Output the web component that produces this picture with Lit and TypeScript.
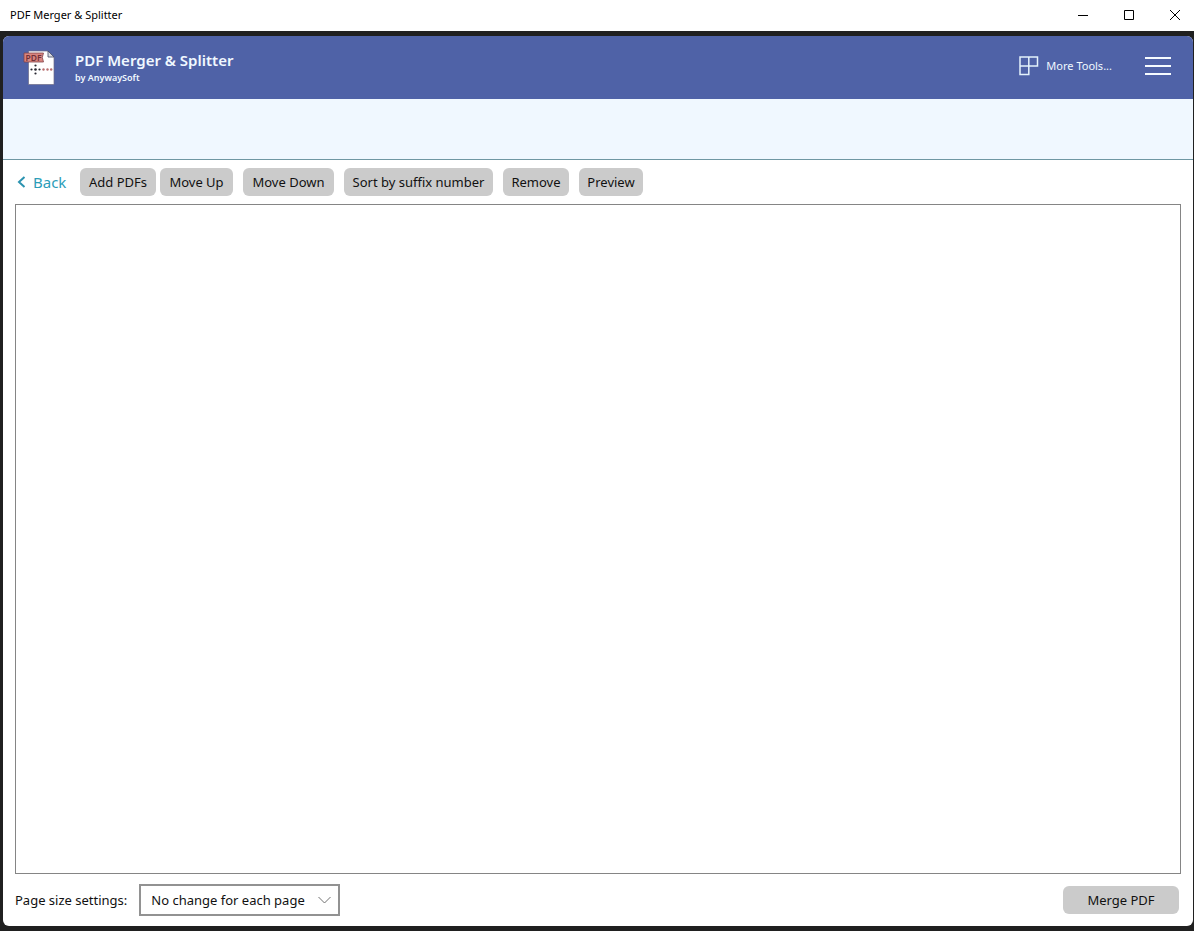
import { LitElement, html, css } from "lit";
import { customElement, state } from "lit/decorators.js";

@customElement("app-root")
export class AppRoot extends LitElement {
  @state() private pageSize = "No change for each page";

  static styles = css`
    :host {
      display: flex;
      flex-direction: column;
      height: 100vh;
      background: #202020;
      color: #111;
      font-family: "Noto Sans", "Open Sans", sans-serif;
      font-size: 13px;
      line-height: 20px;
    }
    * { box-sizing: border-box; }
    button, select { font: inherit; color: inherit; margin: 0; }
    button { border: 0; padding: 0; background: none; white-space: nowrap; }
    svg { display: block; }
    .titlebar {
      display: flex;
      justify-content: space-between;
      align-items: center;
      height: 31px;
      flex: none;
      padding: 0 0 2px 10px;
      background: #fff;
      color: #000;
      font-size: 11px;
    }
    .controls { display: flex; gap: 8px; }
    .controls button { display: grid; place-items: center; width: 38px; height: 28px; }
    .window {
      flex: 1;
      min-height: 0;
      display: flex;
      flex-direction: column;
      margin: 5px 1px 5px 3px;
      border-radius: 6px;
      overflow: hidden;
      background: #fff;
    }
    header {
      display: flex;
      align-items: center;
      height: 63px;
      flex: none;
      padding: 0 22px 0 20px;
      background: #4f62a7;
      color: #f0f8ff;
    }
    .brand { flex: 1; padding: 0 0 1px 19px; }
    h1 { margin: 0 0 1px; font-size: 15px; line-height: 20px; font-weight: 600; }
    .brand p { margin: 0; font-size: 9px; line-height: 14px; font-weight: 600; }
    .tools, .menu { padding-bottom: 4px; }
    .tools { display: flex; align-items: center; gap: 7px; font-size: 11px; }
    .menu { margin-left: 33px; }
    .band { height: 61px; flex: none; background: #f0f8ff; border-bottom: 1px solid #6f97a3; }
    .toolbar { display: flex; align-items: center; height: 44px; flex: none; padding: 0 12px; gap: 10px; }
    .back {
      display: flex;
      align-items: center;
      gap: 7px;
      width: 55px;
      padding-left: 2px;
      color: #2b9db8;
      font-size: 15px;
    }
    .pair { display: grid; grid-template-columns: 76px 73px; gap: 4px; }
    .rest { display: grid; grid-template-columns: 91px 149px 66px 64px; gap: 10px; }
    .action { height: 28px; border-radius: 6px; background: #cbcbcb; }
    .files { flex: 1; min-height: 0; margin: 0 12px; border: 1px solid #858585; }
    footer { display: flex; align-items: center; height: 52px; flex: none; padding: 0 14px 0 12px; }
    .picker { display: grid; align-items: center; width: 201px; margin-left: 12px; }
    .picker > * { grid-area: 1 / 1; }
    .picker svg { justify-self: end; margin-right: 9px; pointer-events: none; }
    select {
      appearance: none;
      width: 100%;
      height: 32px;
      padding: 0 30px 0 10px;
      border: 2px solid #929292;
      border-radius: 0;
      background: #fff;
    }
    .merge { width: 116px; margin-left: auto; }
  `;

  private choose(e: Event) {
    this.pageSize = (e.target as HTMLSelectElement).value;
  }

  private action(label: string) {
    return html`<button class="action">${label}</button>`;
  }

  render() {
    return html`
      <div class="titlebar">
        <span>PDF Merger &amp; Splitter</span>
        <div class="controls">
          <button aria-label="Minimize">
            <svg width="10" height="10"><path d="M0 5.5h10" stroke="#000" /></svg>
          </button>
          <button aria-label="Maximize">
            <svg width="10" height="10"><path d="M.5.5h9v9h-9z" fill="none" stroke="#000" /></svg>
          </button>
          <button aria-label="Close">
            <svg width="10" height="10"><path d="M0 0l10 10M10 0L0 10" stroke="#000" /></svg>
          </button>
        </div>
      </div>
      <main class="window">
        <header>
          <svg width="33" height="36" viewBox="0 0 33 36" aria-hidden="true">
            <path d="M5.500 1h19.500l6 6v27.500H5.500z" fill="#fff" stroke="#6d6b86" stroke-width=".7" />
            <path d="M25 1v6h6z" fill="#d9dce2" stroke="#3f4560" stroke-width=".8" />
            <path d="M1 3h19.500l-1.200 4.500 1.200 4.500H1z" fill="#d9857f" stroke="#80424a" stroke-width=".8" />
            <text x="2.500" y="10.500" font-family="Noto Sans, sans-serif" font-size="8.500" font-weight="600" fill="#703038">PDF</text>
            <g fill="#282832">
              <circle cx="8.500" cy="19.500" r="1.100" /><circle cx="12.500" cy="19.500" r="1.300" />
              <circle cx="16.500" cy="19.500" r="1.100" /><circle cx="12.500" cy="15.500" r="1.100" />
              <circle cx="12.500" cy="23.500" r="1.100" />
            </g>
            <g fill="#b96f70">
              <circle cx="20.500" cy="19.500" r="1.200" /><circle cx="24.500" cy="19.500" r="1.200" />
              <circle cx="28.200" cy="19.500" r="1.200" />
            </g>
          </svg>
          <div class="brand">
            <h1>PDF Merger &amp; Splitter</h1>
            <p>by AnywaySoft</p>
          </div>
          <button class="tools">
            <svg width="20" height="20" viewBox="0 0 20 20" fill="none" stroke="#e4f2fb" stroke-width="1.500">
              <path d="M1 1h17.500v9H1zM1 10v8.500h8.800V1" />
            </svg>
            More Tools...
          </button>
          <button class="menu" aria-label="Menu">
            <svg width="26" height="20" stroke="#f6fbff" stroke-width="2"><path d="M0 2h26M0 10h26M0 18h26" /></svg>
          </button>
        </header>
        <div class="band"></div>
        <nav class="toolbar">
          <button class="back">
            <svg width="9" height="12" fill="none" stroke="#2b93b0" stroke-width="2"><path d="M7.500 1L2 6l5.500 5" /></svg>
            Back
          </button>
          <div class="pair">${["Add PDFs", "Move Up"].map((l) => this.action(l))}</div>
          <div class="rest">
            ${["Move Down", "Sort by suffix number", "Remove", "Preview"].map((l) => this.action(l))}
          </div>
        </nav>
        <section class="files" aria-label="PDF files"></section>
        <footer>
          <label for="page-size">Page size settings:</label>
          <div class="picker">
            <select id="page-size" .value=${this.pageSize} @change=${this.choose}>
              <option>No change for each page</option>
            </select>
            <svg width="13" height="8" fill="none" stroke="#707070"><path d="M.5 1l6 6 6-6" /></svg>
          </div>
          <button class="action merge">Merge PDF</button>
        </footer>
      </main>
    `;
  }
}
